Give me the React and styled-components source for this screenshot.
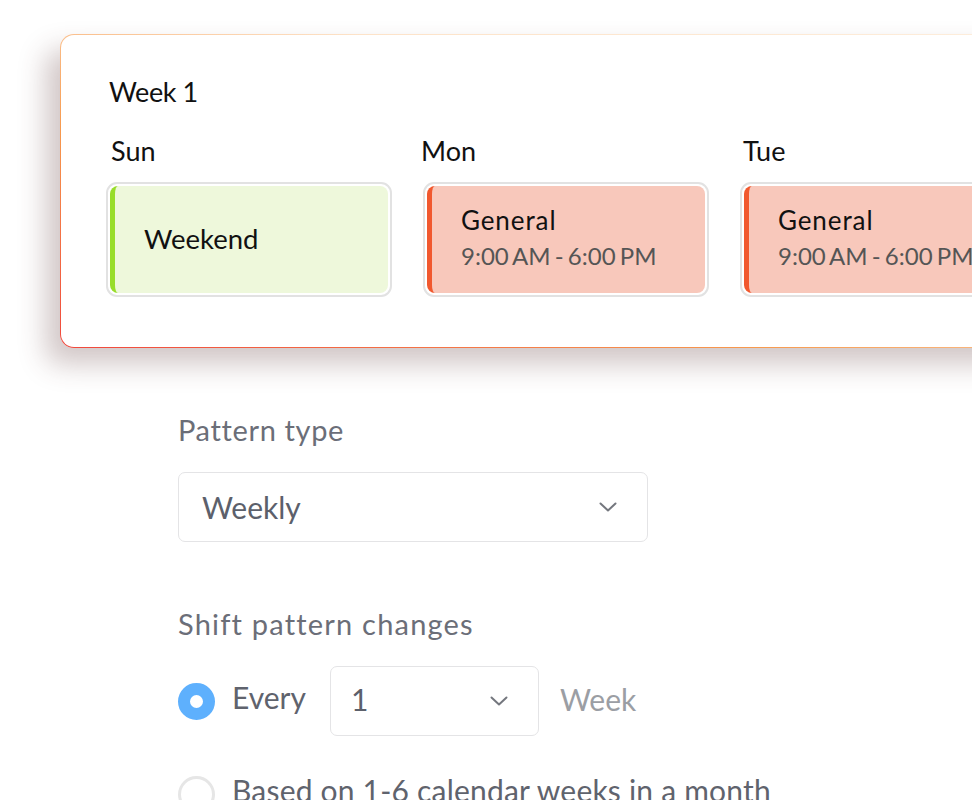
import React from "react";
import styled, { createGlobalStyle } from "styled-components";

const GlobalStyle = createGlobalStyle`
  html, body {
    margin: 0;
    padding: 0;
    background: #ffffff;
    overflow: hidden;
  }
  body {
    font-family: Lato, "Noto Sans", sans-serif;
    color: #111111;
  }
`;

const Page = styled.div`
  width: 972px;
  height: 800px;
  overflow: hidden;
  padding: 34px 0 0 60px;
  box-sizing: border-box;
`;

const Card = styled.section`
  width: 1000px;
  box-sizing: border-box;
  padding: 41px 0 50px 45px;
  border: 1.5px solid transparent;
  border-radius: 14px;
  background:
    linear-gradient(#ffffff, #ffffff) padding-box,
    linear-gradient(to top right, #f0473c 0%, #f79a4e 35%, #fde3c9 65%, #fdeedd 100%) border-box;
  box-shadow: -14px 16px 28px rgba(90, 50, 50, 0.28);
`;

const WeekTitle = styled.div`
  font-size: 27px;
  line-height: 32px;
  margin-left: 3px;
  letter-spacing: -0.4px;
`;

const DaysRow = styled.div`
  display: flex;
  gap: 31px;
  margin-top: 27px;
`;

const DayColumn = styled.div`
  width: 286px;
  flex-shrink: 0;
`;

const DayLabel = styled.div`
  font-size: 27px;
  line-height: 32px;
  margin-left: ${({ offset }) => offset}px;
  margin-bottom: 15px;
`;

const DayBox = styled.div`
  height: 115px;
  box-sizing: border-box;
  border: 2px solid #e2e2e2;
  border-radius: 11px;
  padding: 2px;
  display: flex;
`;

const DayFill = styled.div`
  flex: 1;
  border-radius: 8px;
  border-left: 5px solid ${({ accent }) => accent};
  background: ${({ fill }) => fill};
  display: flex;
  flex-direction: column;
  justify-content: center;
  padding-left: 29px;
  padding-bottom: 3px;
`;

const ShiftName = styled.div`
  font-size: ${({ big }) => (big ? 27.5 : 26)}px;
  letter-spacing: ${({ big }) => (big ? 0 : 0.9)}px;
  line-height: 35px;
  color: #111111;
`;

const ShiftTime = styled.div`
  font-size: 24px;
  line-height: 35px;
  word-spacing: -2px;
  color: #555555;
`;

const Form = styled.div`
  margin-left: 118px;
  margin-top: 64px;
`;

const FieldLabel = styled.div`
  font-size: 29px;
  line-height: 36px;
  color: #6b6e78;
  letter-spacing: ${({ spacing }) => spacing}px;
`;

const Select = styled.div`
  width: ${({ width }) => width}px;
  height: 70px;
  box-sizing: border-box;
  border: 1.5px solid #e4e4e6;
  border-radius: 7px;
  display: flex;
  align-items: center;
  justify-content: space-between;
  padding: 0 30px 0 ${({ padLeft }) => padLeft}px;
  font-size: 30px;
  color: #5c606b;
  flex-shrink: 0;
`;

const SelectValue = styled.span`
  padding-bottom: ${({ lift }) => lift || 0}px;
`;

const PatternSelect = styled(Select)`
  margin-top: 24px;
`;

const ShiftLabel = styled(FieldLabel)`
  margin-top: 64px;
`;

const RadioRow = styled.div`
  display: flex;
  align-items: center;
  margin-top: ${({ top }) => top}px;
`;

const Radio = styled.span`
  width: 37px;
  height: 37px;
  box-sizing: border-box;
  border-radius: 50%;
  flex-shrink: 0;
  border: ${({ checked }) => (checked ? "12px solid #5eb0fd" : "3px solid #e6e6e6")};
  background: #ffffff;
`;

const RadioText = styled.span`
  font-size: 30px;
  color: #5f636d;
  margin: 0 24px 0 17px;
  padding-bottom: 8px;
  letter-spacing: ${({ spacing }) => spacing || 0}px;
  white-space: nowrap;
`;

const UnitText = styled.span`
  font-size: 30px;
  color: #9b9ea4;
  margin-left: 21px;
  padding-bottom: 4px;
`;

const Chevron = () => (
  <svg width="18" height="10" viewBox="0 0 18 10" fill="none">
    <path d="M1.5 1.5 L9 8.5 L16.5 1.5" stroke="#74777e" strokeWidth="2" strokeLinecap="round" strokeLinejoin="round" />
  </svg>
);

const days = [
  { label: "Sun", offset: 5, name: "Weekend", accent: "#98dd2a", fill: "#eef8db" },
  { label: "Mon", offset: -2, name: "General", time: "9:00 AM - 6:00 PM", accent: "#f1582e", fill: "#f8c8bb" },
  { label: "Tue", offset: 3, name: "General", time: "9:00 AM - 6:00 PM", accent: "#f1582e", fill: "#f8c8bb" },
];

const App = () => {
  return (
    <>
      <GlobalStyle />
      <Page>
        <Card>
          <WeekTitle>Week 1</WeekTitle>
          <DaysRow>
            {days.map((day) => (
              <DayColumn key={day.label}>
                <DayLabel offset={day.offset}>{day.label}</DayLabel>
                <DayBox>
                  <DayFill accent={day.accent} fill={day.fill}>
                    <ShiftName big={!day.time}>{day.name}</ShiftName>
                    {day.time && <ShiftTime>{day.time}</ShiftTime>}
                  </DayFill>
                </DayBox>
              </DayColumn>
            ))}
          </DaysRow>
        </Card>
        <Form>
          <FieldLabel spacing={0.65}>Pattern type</FieldLabel>
          <PatternSelect width={470} padLeft={23}>
            <SelectValue>Weekly</SelectValue>
            <Chevron />
          </PatternSelect>
          <ShiftLabel spacing={1.2}>Shift pattern changes</ShiftLabel>
          <RadioRow top={24}>
            <Radio checked />
            <RadioText>Every</RadioText>
            <Select width={209} padLeft={20}>
              <SelectValue lift={4}>1</SelectValue>
              <Chevron />
            </Select>
            <UnitText>Week</UnitText>
          </RadioRow>
          <RadioRow top={36}>
            <Radio />
            <RadioText spacing={0.2}>Based on 1-6 calendar weeks in a month</RadioText>
          </RadioRow>
        </Form>
      </Page>
    </>
  );
};

export default App;
